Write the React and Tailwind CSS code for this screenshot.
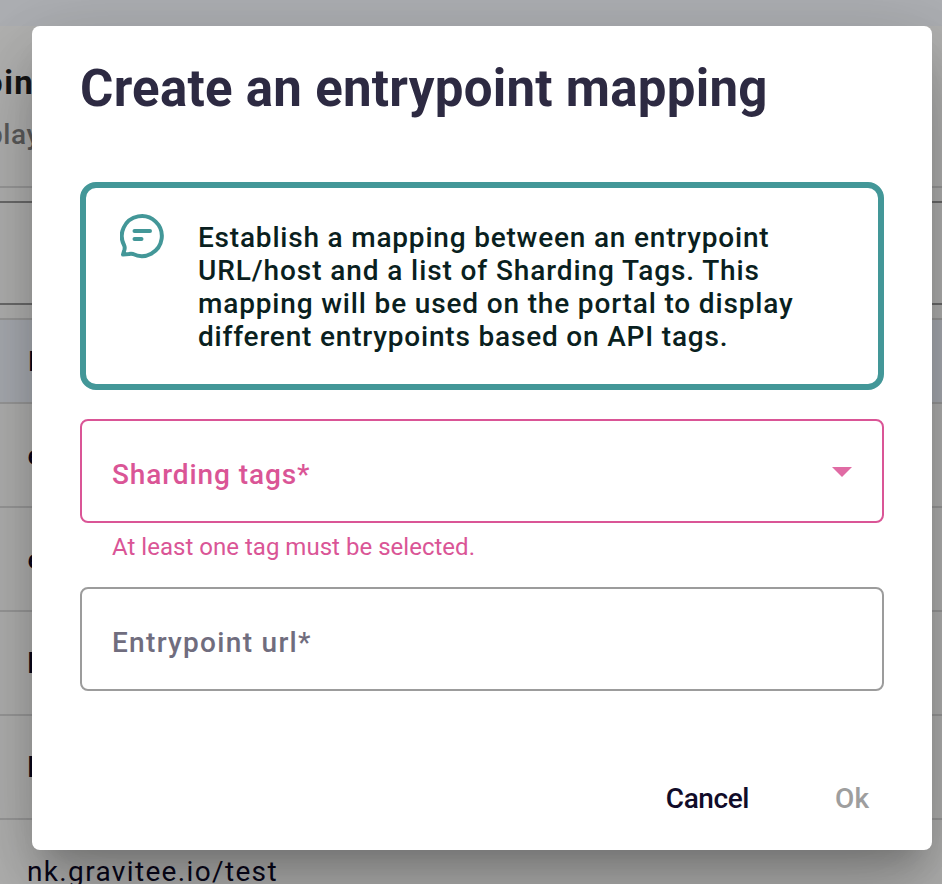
import React from 'react';

const rows = ['e', 'e', 'h', 'h'];

function Backdrop() {
  return (
    <div className="flex h-[884px] flex-col bg-[#b3b3b2] whitespace-nowrap">
      <div className="h-[26px] shrink-0 bg-[#aeb0b4]" />
      <div className="h-[160px] shrink-0">
        <div className="-ml-[16px] pt-[36px] text-[33px] leading-[42px] font-bold tracking-[1.5px] text-[#151515]">oin</div>
        <div className="-ml-[13px] pt-[14px] text-[28px] leading-[34px] font-medium tracking-[0.6px] text-[#5c5c5c]">play</div>
      </div>
      <div className="h-[15px] shrink-0 border-t-2 border-[#9b9b9b]" />
      <div className="h-[104px] shrink-0 border-y-2 border-[#6c6c6c]" />
      <div className="h-[13px] shrink-0" />
      <div className="flex h-[86px] shrink-0 items-center border-y-2 border-[#9b9b9b] bg-[#abaeb4] pt-[2px] pl-[28px] text-[28px] font-medium text-[#09071a]">
        H
      </div>
      {rows.map((label, i) => (
        <div key={i} className="flex h-[104px] shrink-0 items-center border-b-2 border-[#9b9b9b] pt-[2px] pl-[27.5px] text-[28px] font-medium text-[#09071a]">
          {label}
        </div>
      ))}
      <div className="h-[64px] shrink-0 pt-[34px] pl-[27px] text-[28px] leading-[36px] tracking-[1.35px] text-[#09071a]">
        nk.gravitee.io/test
      </div>
    </div>
  );
}

function MessageIcon() {
  return (
    <svg className="mt-[25px] ml-[34px] h-[46px] w-[46px] shrink-0" viewBox="0 0 46 46" fill="none" stroke="#439798" strokeWidth="4" strokeLinecap="round" strokeLinejoin="round">
      <path d="M4.3 32.7A20 20 0 1 1 13 41Q11 40.5 9 41L3 41.5L4.5 36.5Q5 34.5 4.3 32.7Z" />
      <path d="M14.5 18H30M14.5 26H21.5" />
    </svg>
  );
}

function Dialog() {
  return (
    <div className="h-[824px] w-[900px] rounded-[8px] bg-white px-[48px] whitespace-nowrap shadow-[0_22px_30px_-14px_rgba(0,0,0,0.2),0_48px_76px_6px_rgba(0,0,0,0.14),0_18px_92px_16px_rgba(0,0,0,0.12)]">
      <h1 className="h-[156px] pt-[33px] text-[51px] leading-[60px] font-bold tracking-[0.27px] text-[#2d2a42]">Create an entrypoint mapping</h1>
      <div className="flex h-[208px] rounded-[16px] border-[6px] border-[#439798]">
        <MessageIcon />
        <div className="mt-[33px] ml-[32px] flex flex-col text-[28px] leading-[33px] font-medium text-[#0a1f20]">
          <span className="tracking-[0.8px]">Establish a mapping between an entrypoint</span>
          <span className="tracking-[0.9px]">URL/host and a list of Sharding Tags. This</span>
          <span className="tracking-[0.84px]">mapping will be used on the portal to display</span>
          <span className="tracking-[0.81px]">different entrypoints based on API tags.</span>
        </div>
      </div>
      <div className="mt-[29px] flex h-[104px] items-center justify-between rounded-[8px] border-2 border-[#da5596] pr-[30px] pl-[30px]">
        <span className="pt-[8px] text-[28px] font-medium tracking-[0.9px] text-[#da5596]">Sharding tags*</span>
        <svg className="mt-[2px] h-[10px] w-[20px]" viewBox="0 0 20 10" fill="#e06ba4"><path d="M0 0H20L10 10Z" /></svg>
      </div>
      <div className="h-[64px] pt-[10px] pl-[32px] text-[24px] leading-[28px] tracking-[0.02px] text-[#da5596]">At least one tag must be selected.</div>
      <div className="flex h-[104px] items-center rounded-[8px] border-2 border-[#9c9c9c] pl-[30px]">
        <span className="pt-[8px] text-[28px] font-medium tracking-[1.3px] text-[#706d7e]">Entrypoint url*</span>
      </div>
      <div className="mt-[91px] flex justify-end gap-[86px] pr-[15px] text-[28px] leading-[34px] font-medium">
        <span className="tracking-[-0.4px] text-[#110c29]">Cancel</span>
        <span className="text-[#9e9e9e]">Ok</span>
      </div>
    </div>
  );
}

export default function App() {
  return (
    <div className="relative h-[884px] w-[942px] overflow-hidden font-[Roboto,sans-serif]">
      <Backdrop />
      <div className="absolute inset-0 pt-[26px] pl-[32px]">
        <Dialog />
      </div>
    </div>
  );
}
